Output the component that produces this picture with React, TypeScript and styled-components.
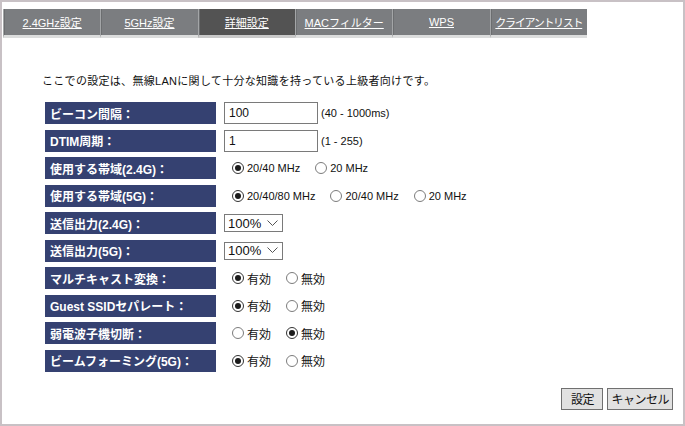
import styled, { createGlobalStyle } from "styled-components";

const GlobalStyle = createGlobalStyle`
  html, body { margin: 0; padding: 0; background: #fff; }
  body { font-family: "Liberation Sans", "Noto Sans CJK JP", sans-serif; color: #111; }
`;

const Frame = styled.div`
  box-sizing: border-box;
  width: 685px;
  height: 426px;
  border: 2px solid #c8c1c5;
  padding: 7px 0 0 1px;
`;

const TabBar = styled.div`
  display: flex;
  width: 584px;
  height: 29px;
`;

const Tab = styled.a<{ $active?: boolean; $tight?: boolean }>`
  flex: 1;
  min-width: 0;
  display: flex;
  align-items: center;
  justify-content: center;
  white-space: nowrap;
  color: #fff;
  font-size: 11px;
  letter-spacing: ${(p) => (p.$tight ? "-1.3px" : "0")};
  text-decoration: underline;
  background: ${(p) => (p.$active ? "#535353" : "#7b7d80")};
  border-left: 1px solid #a3a5a7;
  border-bottom: 3px solid ${(p) => (p.$active ? "#c9c9c9" : "#dcdddd")};
  box-shadow: inset 1px 0 0 #6c6e70;
`;

const Notice = styled.p`
  margin: 36px 0 14px 39px;
  font-size: 11px;
  line-height: 14px;
  letter-spacing: 0.3px;
`;

const Form = styled.div`
  display: flex;
  flex-direction: column;
  gap: 5.5px;
  margin-left: 42px;
`;

const Row = styled.div`
  display: flex;
  align-items: center;
  gap: 8px;
  height: 22px;
`;

const Label = styled.div`
  box-sizing: border-box;
  width: 171px;
  height: 22px;
  display: flex;
  align-items: center;
  padding-left: 5px;
  background: #354171;
  color: #fff;
  font-size: 12px;
  font-weight: bold;
`;

const Field = styled.div`
  display: flex;
  align-items: center;
  gap: 3px;
`;

const TextBox = styled.input`
  box-sizing: border-box;
  width: 94px;
  height: 22px;
  border: 1px solid #7a7a7a;
  padding: 0 4px;
  font-family: inherit;
  font-size: 12px;
  color: #111;
  outline: none;
`;

const Hint = styled.span`
  font-size: 11px;
`;

const RadioGroup = styled.div`
  display: flex;
  align-items: center;
  gap: 15px;
  padding-left: 8px;
`;

const RadioItem = styled.label<{ $small?: boolean }>`
  display: flex;
  align-items: center;
  gap: 3px;
  font-size: ${(p) => (p.$small ? "11px" : "12px")};
`;

const RadioDot = styled.span<{ $on?: boolean }>`
  box-sizing: border-box;
  width: 12px;
  height: 12px;
  border-radius: 50%;
  border: 1px solid ${(p) => (p.$on ? "#333" : "#7c7c7c")};
  background: #fff;
  display: flex;
  align-items: center;
  justify-content: center;
  &::after {
    content: "";
    width: 6px;
    height: 6px;
    border-radius: 50%;
    background: ${(p) => (p.$on ? "#1b1b1b" : "transparent")};
  }
`;

const Select = styled.div`
  box-sizing: border-box;
  width: 59px;
  height: 18px;
  border: 1px solid #7a7a7a;
  display: flex;
  align-items: center;
  justify-content: space-between;
  padding: 0 4px 0 3px;
  font-size: 13px;
  background: #fff;
`;

const Actions = styled.div`
  display: flex;
  justify-content: flex-end;
  gap: 4px;
  margin: 16px 10px 0 0;
`;

const Button = styled.button`
  min-width: 42px;
  height: 22px;
  padding: 0 3px;
  border: 1px solid #707070;
  background: #e1e1e1;
  font-family: "Liberation Sans", "Noto Sans CJK JP", sans-serif;
  font-size: 12px;
  letter-spacing: -0.5px;
  color: #111;
`;

type Opt = { text: string; on?: boolean };

function Radios({ items, small }: { items: Opt[]; small?: boolean }) {
  return (
    <RadioGroup>
      {items.map((o) => (
        <RadioItem key={o.text} $small={small}>
          <RadioDot $on={o.on} />
          {o.text}
        </RadioItem>
      ))}
    </RadioGroup>
  );
}

function Power() {
  return (
    <Select>
      100%
      <svg width="11" height="7" viewBox="0 0 11 7">
        <path d="M0.5 0.5 L5.5 5.5 L10.5 0.5" fill="none" stroke="#555" strokeWidth="1" />
      </svg>
    </Select>
  );
}

const tabs = ["2.4GHz設定", "5GHz設定", "詳細設定", "MACフィルター", "WPS", "クライアントリスト"];

const onOff = (on: boolean): Opt[] => [
  { text: "有効", on },
  { text: "無効", on: !on },
];

export default function App() {
  return (
    <>
      <GlobalStyle />
      <Frame>
        <TabBar>
          {tabs.map((t) => (
            <Tab key={t} $active={t === "詳細設定"} $tight={t === "クライアントリスト"}>
              {t}
            </Tab>
          ))}
        </TabBar>
        <Notice>ここでの設定は、無線LANに関して十分な知識を持っている上級者向けです。</Notice>
        <Form>
          <Row>
            <Label>ビーコン間隔：</Label>
            <Field>
              <TextBox defaultValue="100" />
              <Hint>(40 - 1000ms)</Hint>
            </Field>
          </Row>
          <Row>
            <Label>DTIM周期：</Label>
            <Field>
              <TextBox defaultValue="1" />
              <Hint>(1 - 255)</Hint>
            </Field>
          </Row>
          <Row>
            <Label>使用する帯域(2.4G)：</Label>
            <Radios small items={[{ text: "20/40 MHz", on: true }, { text: "20 MHz" }]} />
          </Row>
          <Row>
            <Label>使用する帯域(5G)：</Label>
            <Radios
              small
              items={[{ text: "20/40/80 MHz", on: true }, { text: "20/40 MHz" }, { text: "20 MHz" }]}
            />
          </Row>
          <Row>
            <Label>送信出力(2.4G)：</Label>
            <Power />
          </Row>
          <Row>
            <Label>送信出力(5G)：</Label>
            <Power />
          </Row>
          <Row>
            <Label>マルチキャスト変換：</Label>
            <Radios items={onOff(true)} />
          </Row>
          <Row>
            <Label>Guest SSIDセパレート：</Label>
            <Radios items={onOff(true)} />
          </Row>
          <Row>
            <Label>弱電波子機切断：</Label>
            <Radios items={onOff(false)} />
          </Row>
          <Row>
            <Label>ビームフォーミング(5G)：</Label>
            <Radios items={onOff(true)} />
          </Row>
        </Form>
        <Actions>
          <Button>設定</Button>
          <Button>キャンセル</Button>
        </Actions>
      </Frame>
    </>
  );
}
